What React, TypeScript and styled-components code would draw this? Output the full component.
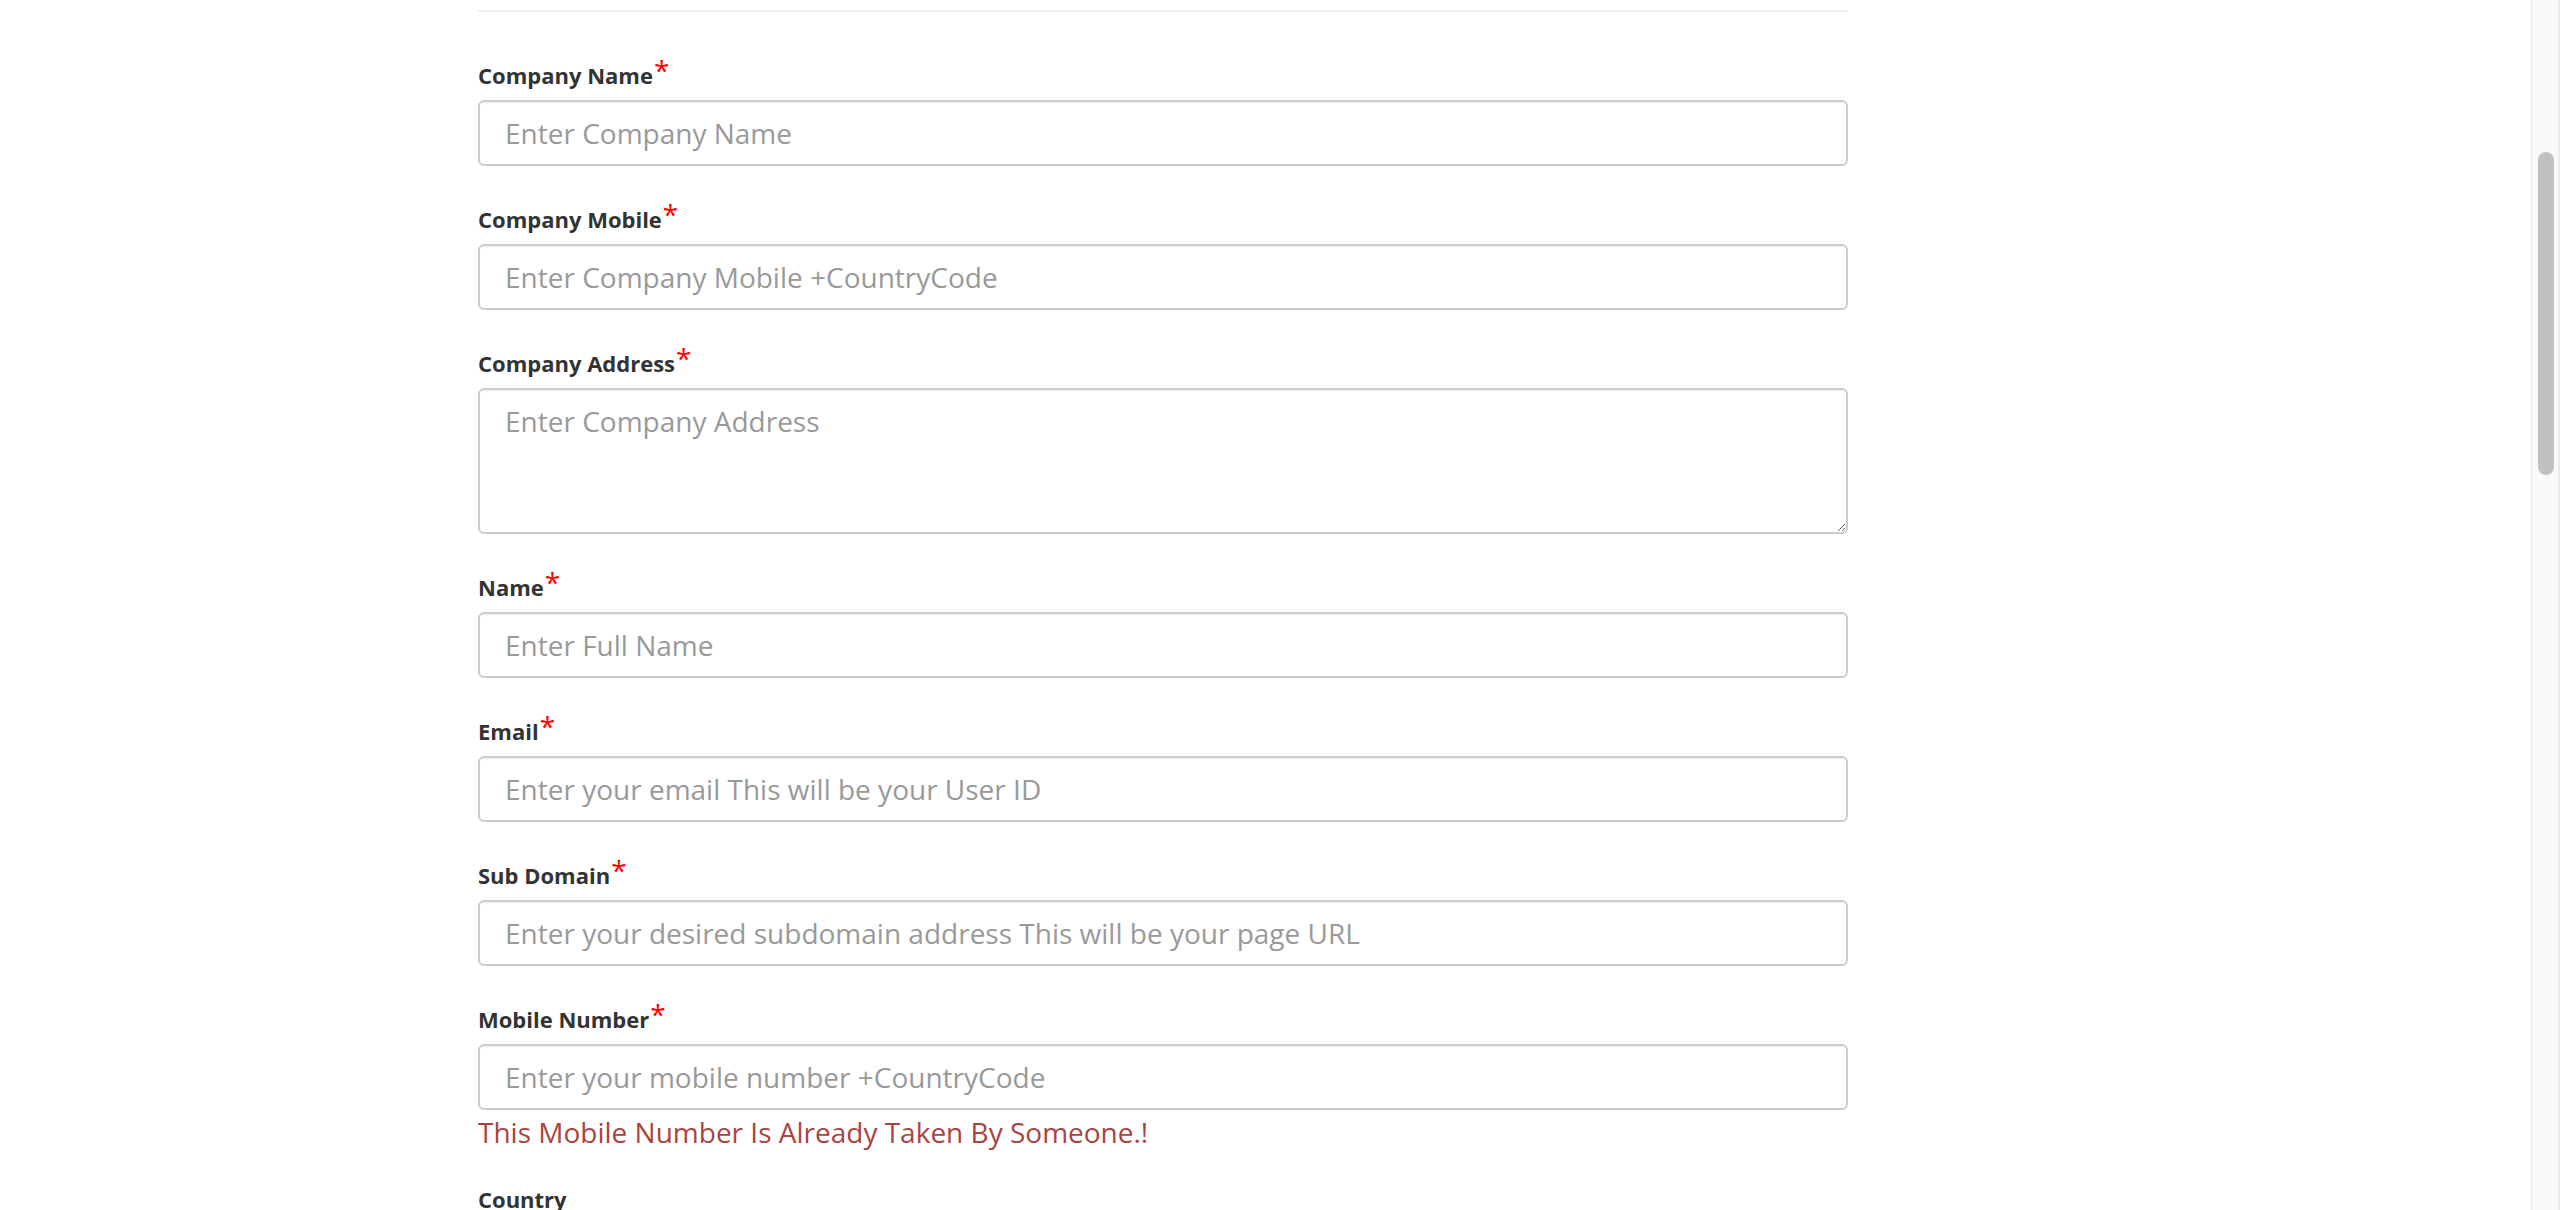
import styled, { createGlobalStyle } from 'styled-components';

const GlobalStyle = createGlobalStyle`
  html, body {
    margin: 0;
    padding: 0;
    background: #fff;
    overflow: hidden;
  }
  body {
    font-family: 'Open Sans', 'Liberation Sans', sans-serif;
  }
  * {
    box-sizing: border-box;
  }
`;

type Field = {
  label: string;
  placeholder: string;
  required?: boolean;
  multiline?: boolean;
  error?: string;
};

const fields: Field[] = [
  { label: 'Company Name', placeholder: 'Enter Company Name', required: true },
  { label: 'Company Mobile', placeholder: 'Enter Company Mobile +CountryCode', required: true },
  { label: 'Company Address', placeholder: 'Enter Company Address', required: true, multiline: true },
  { label: 'Name', placeholder: 'Enter Full Name', required: true },
  { label: 'Email', placeholder: 'Enter your email This will be your User ID', required: true },
  { label: 'Sub Domain', placeholder: 'Enter your desired subdomain address This will be your page URL', required: true },
  {
    label: 'Mobile Number',
    placeholder: 'Enter your mobile number +CountryCode',
    required: true,
    error: 'This Mobile Number Is Already Taken By Someone.!',
  },
  { label: 'Country', placeholder: 'Select Country' },
];

const App: React.FC = () => {
  return (
    <Page>
      <GlobalStyle />
      <Main>
        <FormColumn>
          <Divider />
          <Form>
            {fields.map((f) => (
              <FormGroup key={f.label}>
                <Label>
                  {f.label}
                  {f.required && <Required>*</Required>}
                </Label>
                {f.multiline ? (
                  <TextArea placeholder={f.placeholder} />
                ) : (
                  <Input type="text" placeholder={f.placeholder} />
                )}
                {f.error && <ErrorText>{f.error}</ErrorText>}
              </FormGroup>
            ))}
          </Form>
        </FormColumn>
      </Main>
      <ScrollRail>
        <ScrollThumb />
      </ScrollRail>
    </Page>
  );
};

const Page = styled.div`
  display: flex;
  width: 100vw;
  height: 1210px;
  overflow: hidden;
`;

const Main = styled.div`
  flex: 1;
  padding: 10px 0 0 478px;
  overflow: hidden;
`;

const FormColumn = styled.div`
  width: 1370px;
`;

const Divider = styled.div`
  height: 2px;
  background: #eeeeee;
`;

const Form = styled.form`
  display: flex;
  flex-direction: column;
  gap: 38px;
  padding-top: 48px;
`;

const FormGroup = styled.div`
  display: flex;
  flex-direction: column;
`;

const Label = styled.label`
  font-size: 22px;
  line-height: 30px;
  font-weight: 700;
  color: #333333;
  margin-bottom: 10px;
`;

const Required = styled.span`
  color: #ff0000;
  font-size: 28px;
  font-weight: 400;
  line-height: 0;
  position: relative;
  top: -3px;
  margin-left: 1px;
`;

const controlStyles = `
  width: 100%;
  border: 2px solid #cccccc;
  border-radius: 6px;
  box-shadow: inset 0 1px 1px rgba(0, 0, 0, 0.075);
  background: #fff;
  font-family: 'Open Sans', 'Liberation Sans', sans-serif;
  font-size: 28px;
  color: #555555;
  padding: 0 25px;
  outline: none;

  &::placeholder {
    color: #999999;
  }
`;

const Input = styled.input`
  ${controlStyles}
  height: 66px;
`;

const TextArea = styled.textarea`
  ${controlStyles}
  height: 146px;
  padding-top: 12px;
  line-height: 38px;
  resize: vertical;
`;

const ErrorText = styled.div`
  color: #a94442;
  font-size: 28px;
  line-height: 32px;
  margin: 6px 0 -2px;
`;

const ScrollRail = styled.div`
  width: 29px;
  flex-shrink: 0;
  background: #fafafa;
  border-left: 1px solid #e8e8e8;
  border-right: 2px solid #ececec;
  padding: 152px 4px 0 6px;
`;

const ScrollThumb = styled.div`
  width: 16px;
  height: 323px;
  border-radius: 8px;
  background: #c1c1c1;
`;

export default App;
